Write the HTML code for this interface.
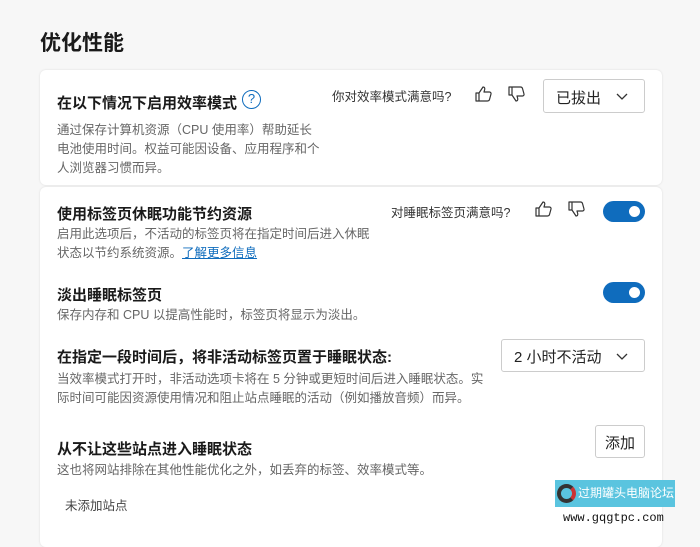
<!DOCTYPE html>
<html><head><meta charset="utf-8"><style>
*{margin:0;padding:0;box-sizing:border-box}
body{width:700px;height:535px;background:#f7f7f7;font-family:"Liberation Sans","Noto Sans CJK SC",sans-serif;position:relative;overflow:hidden;color:#1a1a1a}
.a{position:absolute;white-space:nowrap}
.card{position:absolute;left:40px;width:622px;background:#fff;border-radius:6px;box-shadow:0 0 2px rgba(0,0,0,.12)}
.t{font-size:15px;font-weight:bold}
.d{font-size:12.5px;color:#666;line-height:19px;white-space:normal}
.q{font-size:12.5px;color:#333}
.tog{position:absolute;width:42px;height:21px;border-radius:11px;background:#0f6cbd}
.tog:after{content:"";position:absolute;right:5px;top:5px;width:11px;height:11px;border-radius:50%;background:#fff}
.dd{position:absolute;border:1px solid #ccc;border-radius:3px;background:#fff;font-size:15px;color:#222}
.dd svg{position:absolute;right:16px;top:13px}
</style></head><body>
<svg width="0" height="0" style="position:absolute"><defs>
<symbol id="up" viewBox="0 0 20 20"><path d="M2 9h3v8H2zM5 9l4-6c1.5 0 2 1 1.7 2.5L10 8h5.5c1 0 1.8 1 1.5 2l-1.5 5.5c-.3 1-1 1.5-2 1.5H5" fill="none" stroke="#333" stroke-width="1.2" stroke-linejoin="round"/></symbol>
<symbol id="dn" viewBox="0 0 20 20"><path d="M2 11h3V3H2zM5 11l4 6c1.5 0 2-1 1.7-2.5L10 12h5.5c1 0 1.8-1 1.5-2l-1.5-5.5c-.3-1-1-1.5-2-1.5H5" fill="none" stroke="#333" stroke-width="1.2" stroke-linejoin="round"/></symbol>
<symbol id="chev" viewBox="0 0 12 8"><path d="M1 1l5 5 5-5" fill="none" stroke="#333" stroke-width="1.3"/></symbol>
</defs></svg>
<div class="a" style="left:40px;top:27px;font-size:21px;font-weight:bold">优化性能</div>
<div class="card" style="top:70px;height:115px"></div>
<div class="card" style="top:187px;height:360px"></div>
<div class="a t" style="left:57px;top:92px">在以下情况下启用效率模式</div>
<div class="a" style="left:242px;top:90px;width:19px;height:19px;border:1.5px solid #0f6cbd;border-radius:50%;color:#0f6cbd;font-size:13px;text-align:center;line-height:16px">?</div>
<div class="a d" style="left:57px;top:121px;width:285px">通过保存计算机资源（CPU 使用率）帮助延长<br>电池使用时间。权益可能因设备、应用程序和个<br>人浏览器习惯而异。</div>
<div class="a q" style="left:332px;top:86px">你对效率模式满意吗?</div>
<svg class="a" style="left:474px;top:84px" width="20" height="20"><use href="#up"/></svg>
<svg class="a" style="left:507px;top:84px" width="20" height="20"><use href="#dn"/></svg>
<div class="dd" style="left:543px;top:79px;width:102px;height:34px;padding:7px 12px">已拔出<svg width="12" height="8"><use href="#chev"/></svg></div>
<div class="a t" style="left:57px;top:203px">使用标签页休眠功能节约资源</div>
<div class="a d" style="left:57px;top:225px;width:360px">启用此选项后，不活动的标签页将在指定时间后进入休眠<br>状态以节约系统资源。<span style="color:#0f6cbd;text-decoration:underline">了解更多信息</span></div>
<div class="a q" style="left:391px;top:202px">对睡眠标签页满意吗?</div>
<svg class="a" style="left:534px;top:199px" width="20" height="20"><use href="#up"/></svg>
<svg class="a" style="left:567px;top:199px" width="20" height="20"><use href="#dn"/></svg>
<div class="tog" style="left:603px;top:201px"></div>
<div class="a t" style="left:57px;top:284px">淡出睡眠标签页</div>
<div class="a d" style="left:57px;top:306px">保存内存和 CPU 以提高性能时，标签页将显示为淡出。</div>
<div class="tog" style="left:603px;top:282px"></div>
<div class="a t" style="left:57px;top:346px">在指定一段时间后，将非活动标签页置于睡眠状态:</div>
<div class="a d" style="left:57px;top:370px;width:460px">当效率模式打开时，非活动选项卡将在 5 分钟或更短时间后进入睡眠状态。实<br>际时间可能因资源使用情况和阻止站点睡眠的活动（例如播放音频）而异。</div>
<div class="dd" style="left:501px;top:339px;width:144px;height:33px;padding:6px 12px">2 小时不活动<svg width="12" height="8"><use href="#chev"/></svg></div>
<div class="a t" style="left:57px;top:438px">从不让这些站点进入睡眠状态</div>
<div class="a d" style="left:57px;top:461px">这也将网站排除在其他性能优化之外，如丢弃的标签、效率模式等。</div>
<div class="dd" style="left:595px;top:425px;width:50px;height:33px;padding:6px 9px">添加</div>
<div class="a" style="left:65px;top:495px;font-size:12.5px;color:#444">未添加站点</div>
<div class="a" style="left:555px;top:480px;width:120px;height:27px;background:#5ac4df;color:#fff;font-size:12px;line-height:27px;padding-left:23px;overflow:hidden">过期罐头电脑论坛</div>
<div class="a" style="left:557px;top:484px;width:19px;height:19px;border-radius:50%;border:4px solid #333;border-right-color:#c33"></div>
<div class="a" style="left:563px;top:511px;font-size:12px;font-family:'Liberation Mono',monospace;color:#111">www.gqgtpc.com</div>
</body></html>
